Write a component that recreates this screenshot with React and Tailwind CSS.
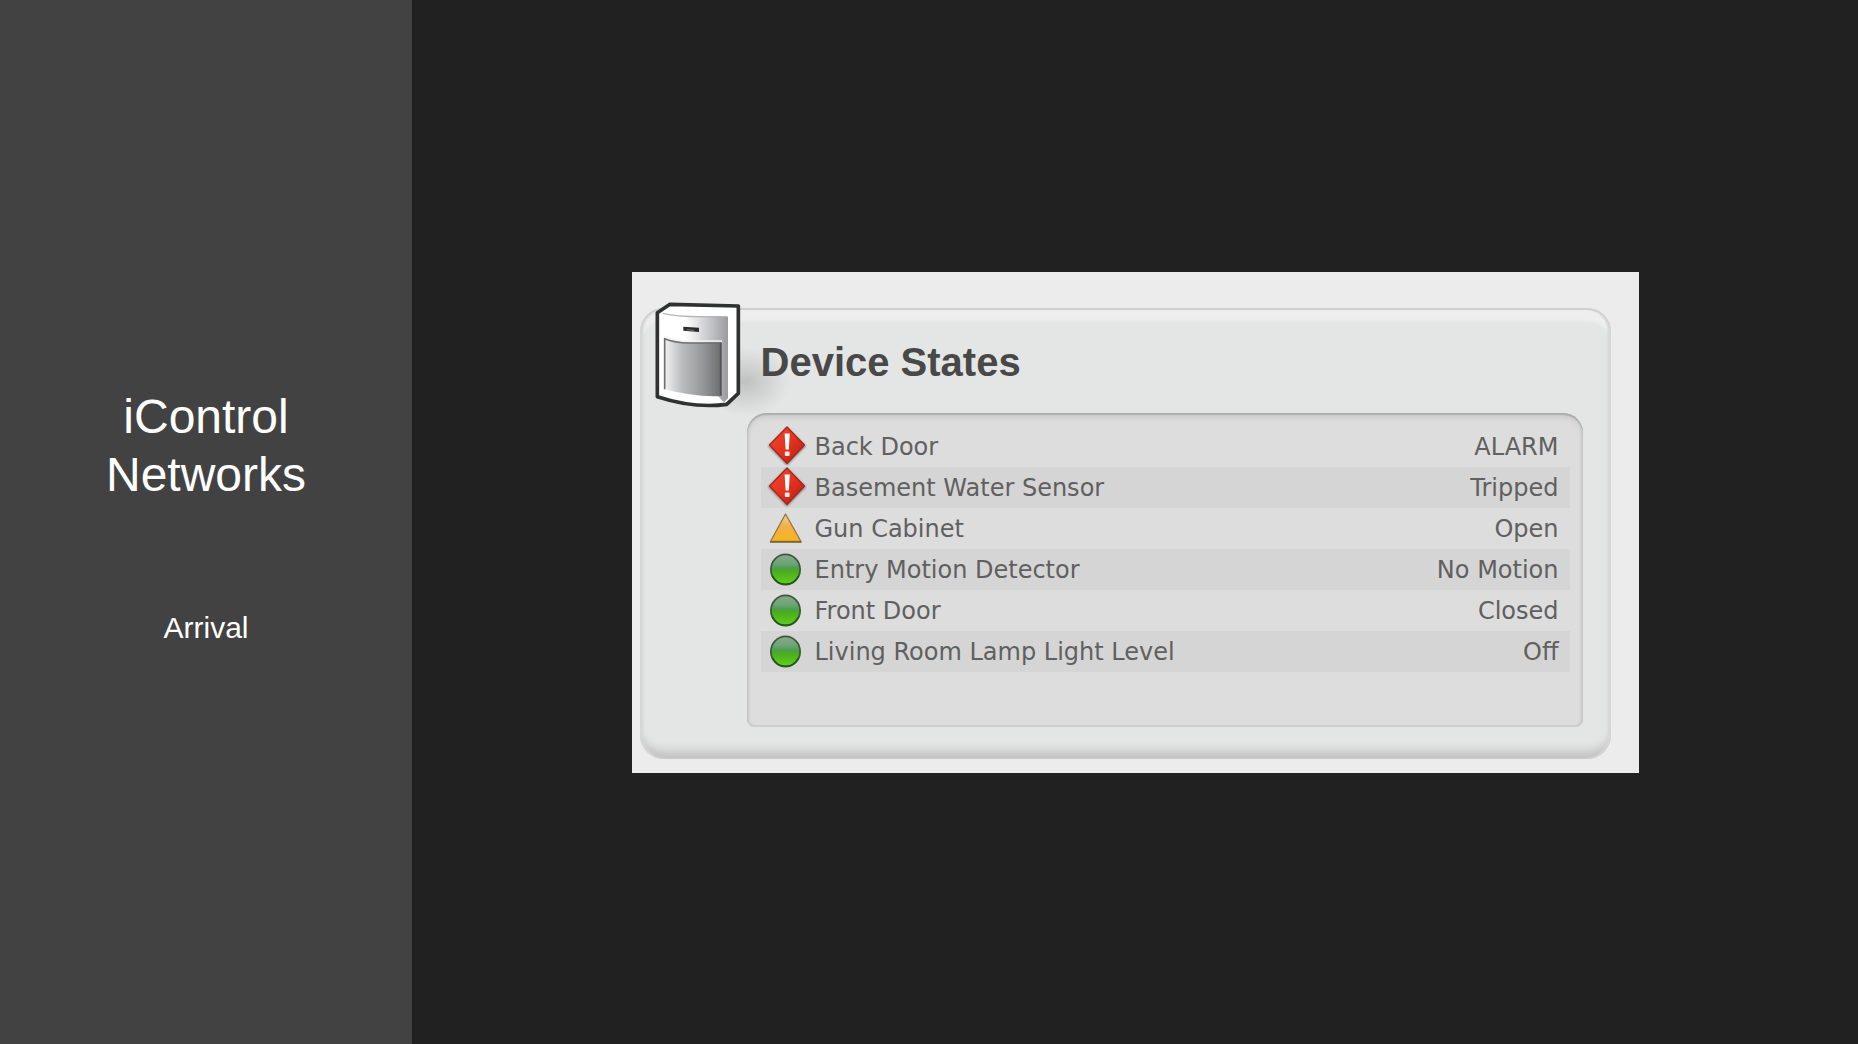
import React from 'react';

const devices = [
  { name: 'Back Door', status: 'ALARM', level: 'alarm' },
  { name: 'Basement Water Sensor', status: 'Tripped', level: 'alarm' },
  { name: 'Gun Cabinet', status: 'Open', level: 'warning' },
  { name: 'Entry Motion Detector', status: 'No Motion', level: 'ok' },
  { name: 'Front Door', status: 'Closed', level: 'ok' },
  { name: 'Living Room Lamp Light Level', status: 'Off', level: 'ok' },
];

// shared gradients for the status icons
const IconDefs = () => (
  <svg className="absolute w-0 h-0" aria-hidden="true">
    <defs>
      <linearGradient id="red" x1="0" y1="0" x2="1" y2="1">
        <stop offset="0" stopColor="#f04a35" />
        <stop offset="0.5" stopColor="#e6321f" />
        <stop offset="1" stopColor="#b01c10" />
      </linearGradient>
      <linearGradient id="amber" x1="0" y1="0" x2="0" y2="1">
        <stop offset="0" stopColor="#f3cf9a" />
        <stop offset="0.45" stopColor="#f2b045" />
        <stop offset="1" stopColor="#f8b41c" />
      </linearGradient>
      <linearGradient id="green" x1="0" y1="0" x2="0" y2="1">
        <stop offset="0" stopColor="#8aa88a" />
        <stop offset="0.3" stopColor="#6ea578" />
        <stop offset="0.45" stopColor="#4b9f52" />
        <stop offset="0.55" stopColor="#4aac1c" />
        <stop offset="1" stopColor="#62d01f" />
      </linearGradient>
      <filter id="soft" x="-20%" y="-20%" width="140%" height="140%">
        <feGaussianBlur stdDeviation="1" />
      </filter>
    </defs>
  </svg>
);

const StatusIcon = ({ level }) => {
  if (level === 'alarm') {
    return (
      <svg viewBox="0 0 40 40" className="block w-10 h-10" role="img" aria-label="Alarm">
        <path d="M20 1 L39 20 L20 39.500 L1 20 Z" fill="#444" opacity="0.6" filter="url(#soft)" />
        <path d="M20 1 L37.500 19 L20 37.500 L2.500 19 Z" fill="url(#red)" stroke="#a3261b" strokeWidth="1.200" strokeLinejoin="round" />
        <path d="M17.600 7.500 H22.800 L21.800 23.500 H18.600 Z" fill="#fff" />
        <rect x="17.800" y="25.500" width="4.800" height="4.500" rx="1" fill="#ffe9e5" />
      </svg>
    );
  }
  if (level === 'warning') {
    return (
      <svg viewBox="0 0 40 40" className="block w-10 h-10" role="img" aria-label="Warning">
        <path d="M18.500 6 L34 33.500 H3.500 Z" fill="url(#amber)" stroke="#8d774c" strokeWidth="1.300" strokeLinejoin="round" />
        <path d="M3 34 H34.500" stroke="#7d6128" strokeWidth="1.500" />
      </svg>
    );
  }
  return (
    <svg viewBox="0 0 40 40" className="block w-10 h-10" role="img" aria-label="OK">
      <ellipse cx="18.500" cy="20.500" rx="14.600" ry="15.200" fill="url(#green)" stroke="#3c5a3c" strokeWidth="1.800" />
      <path d="M5.500 27 A14.600 15.200 0 0 0 31.500 27" fill="none" stroke="#1d5a10" strokeWidth="1.600" />
    </svg>
  );
};

const SensorIcon = () => (
  <svg viewBox="27 30 270 330" className="block w-[90px] h-[110px] overflow-visible" aria-hidden="true">
    <defs>
      <linearGradient id="face" x1="0" y1="0" x2="1" y2="0">
        <stop offset="0.35" stopColor="#fff" />
        <stop offset="0.8" stopColor="#b9babd" />
        <stop offset="1" stopColor="#9b9b9e" />
      </linearGradient>
      <linearGradient id="window" x1="0" y1="0" x2="1" y2="0">
        <stop offset="0" stopColor="#f2f2f2" />
        <stop offset="0.3" stopColor="#bcbdbf" />
        <stop offset="0.65" stopColor="#98999b" />
        <stop offset="1" stopColor="#6c6c6c" />
      </linearGradient>
      <radialGradient id="shade">
        <stop offset="0" stopColor="#888" stopOpacity="0.4" />
        <stop offset="0.5" stopColor="#999" stopOpacity="0.24" />
        <stop offset="1" stopColor="#aaa" stopOpacity="0" />
      </radialGradient>
    </defs>
    <ellipse cx="305" cy="275" rx="135" ry="105" fill="url(#shade)" />
    <path d="M78 43 L283 48 V310 L248 343 Q150 356 40 320 V68 Z" fill="#fff" stroke="#303231" strokeWidth="11" strokeLinejoin="round" />
    <path d="M54 70 Q100 78 150 78 L252 80 V325 L240 337 Q232 330 222 318 L62 298 Z" fill="url(#face)" />
    <path d="M56 70 Q100 80 165 80 H250" fill="none" stroke="#b5b5b5" strokeWidth="4" />
    <path d="M62 145 Q90 158 140 159 L233 158 V318 Q150 322 62 298 Z" fill="url(#window)" />
    <path d="M62 298 V146 Q90 158 140 159 H231" fill="none" stroke="#6f6f6f" strokeWidth="5" />
    <path d="M64 140 Q90 152 140 153 H234" fill="none" stroke="#f4f4f4" strokeWidth="4" />
    <path d="M230 158 V316" stroke="#555" strokeWidth="5" />
    <path d="M118 110 L165 113 V126 L118 122 Z" fill="#2b2b2b" />
    <path d="M128 119 L150 121" stroke="#777" strokeWidth="3" />
  </svg>
);

const DeviceStates = () => (
  <section className="w-full max-w-[1007px] bg-[#ececec] pt-9 pr-7 pb-[14px] pl-2">
    <div className="rounded-3xl bg-[#e4e6e5] pr-7 pb-8 shadow-[inset_0_2px_1px_#cfcfcf,inset_3px_0_2px_#d6d6d6,inset_-3px_0_2px_#d6d6d6,inset_0_-12px_10px_-4px_#c2c2c2,inset_0_14px_3px_-1px_#eeeeee]">
      <header className="flex h-[105px] pl-[13px]">
        <div className="-mt-2 shrink-0">
          <SensorIcon />
        </div>
        <h2 className="relative pl-[18px] pt-[30px] text-[40px] leading-[48px] font-bold text-[#484848]">Device States</h2>
      </header>

      {/* device list */}
      <div className="relative ml-[107px] rounded-t-[20px] rounded-b-lg bg-[#dddddd] pt-[13px] pr-[13px] pb-[55px] pl-[14px] shadow-[inset_0_2px_1px_#adadad,inset_2px_0_2px_#c9c9c9,inset_-2px_0_2px_#c9c9c9,inset_0_-2px_1px_#d0d0d0,inset_0_5px_5px_#cdcdcd]">
        <table className="w-full border-collapse font-['DejaVu_Sans',Verdana,sans-serif] text-2xl leading-[36px] text-[#606060]">
          <tbody>
            {devices.map((device) => (
              <tr key={device.name} className="h-[41px] even:bg-[#d5d5d5]">
                <td className="w-[54px] p-0 pl-[6px]">
                  <StatusIcon level={device.level} />
                </td>
                <th scope="row" className="p-0 pt-[2px] text-left font-normal">{device.name}</th>
                <td className="p-0 pt-[2px] pr-[11px] text-right">{device.status}</td>
              </tr>
            ))}
          </tbody>
        </table>
      </div>
    </div>
  </section>
);

const App = () => {
  return (
    <div className="flex min-h-screen bg-[#212121] font-['Liberation_Sans',Arial,sans-serif]">
      <IconDefs />
      <aside className="flex w-[412px] shrink-0 flex-col items-center justify-center bg-[#424242] px-16 text-center text-white">
        <h1 className="text-5xl leading-[58px]">iControl Networks</h1>
        <p className="mt-24 text-3xl leading-[56px]">Arrival</p>
      </aside>
      <main className="flex flex-1 items-center justify-center">
        <DeviceStates />
      </main>
    </div>
  );
};

export default App;
